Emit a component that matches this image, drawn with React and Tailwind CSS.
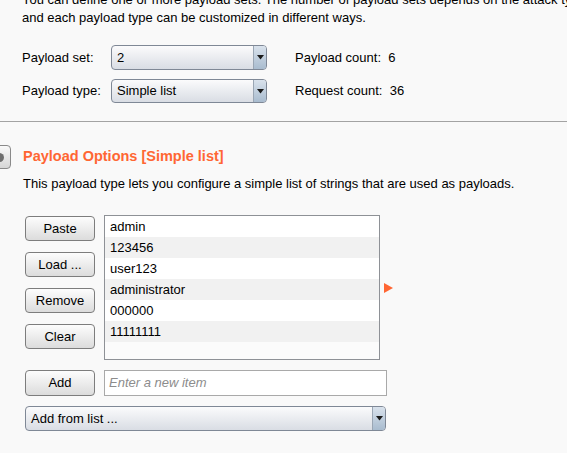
import React from "react";

function Arrow() {
  return (
    <div className="w-[13px] self-stretch flex items-center justify-center border-l border-[#9aa6b4] bg-gradient-to-b from-[#d9e2ec] to-[#a9bccf] rounded-r-[3px]">
      <svg width="7" height="5" viewBox="0 0 7 5"><path d="M0 0H7L3.5 4.5Z" fill="#1a1a1a" /></svg>
    </div>
  );
}

function Select({ value, className }) {
  return (
    <div className={"flex items-stretch border border-[#7f8896] rounded-[4px] bg-gradient-to-b from-[#fbfbfc] to-[#d9dde4] " + className}>
      <div className="flex-1 flex items-center pl-[5px] text-black">{value}</div>
      <Arrow />
    </div>
  );
}

function Btn({ children }) {
  return (
    <div className="w-[70px] h-[25px] flex items-center justify-center border border-[#7d7d7d] rounded-[4px] bg-gradient-to-b from-[#fdfdfd] to-[#dcdcdc] text-black">
      {children}
    </div>
  );
}

export default function App() {
  const items = ["admin", "123456", "user123", "administrator", "000000", "11111111"];
  return (
    <div className="w-[567px] h-[453px] overflow-hidden bg-[#f9f9f9] text-[13px] text-black font-['Liberation_Sans',Arial,sans-serif]">
      <div className="pl-[22px] -mt-[9px] leading-[18px] whitespace-nowrap">
        <div>You can define one or more payload sets. The number of payload sets depends on the attack type defined in the Positions tab.</div>
        <div>and each payload type can be customized in different ways.</div>
      </div>

      <div className="mt-[18px] pl-[22px] flex items-center h-[25px]">
        <div className="w-[89px]">Payload set:</div>
        <Select value="2" className="w-[156px] h-[25px]" />
        <div className="ml-[28px]">Payload count:&nbsp; 6</div>
      </div>
      <div className="mt-[9px] pl-[22px] flex items-center h-[24px]">
        <div className="w-[89px]">Payload type:</div>
        <Select value="Simple list" className="w-[156px] h-[24px]" />
        <div className="ml-[28px]">Request count:&nbsp; 36</div>
      </div>

      <div className="mt-[18px] h-px bg-[#a3a3a3]" />

      <div className="mt-[23px] flex items-center h-[24px]">
        <div className="w-[24px] h-[24px] -ml-[13px] border border-[#8a8a8a] rounded-[4px] bg-gradient-to-b from-[#fafafa] to-[#d6d6d6] flex items-center justify-center">
          <div className="w-[9px] h-[9px] rounded-full bg-[#6e6e6e]" />
        </div>
        <div className="ml-[12px] text-[14.5px] font-bold text-[#ff6633]">Payload Options [Simple list]</div>
      </div>
      <div className="mt-[6px] pl-[23px] h-[18px] leading-[18px]">
        This payload type lets you configure a simple list of strings that are used as payloads.
      </div>

      <div className="mt-[23px] pl-[25px] flex items-start">
        <div className="flex flex-col gap-[11px]">
          <Btn>Paste</Btn>
          <Btn>Load ...</Btn>
          <Btn>Remove</Btn>
          <Btn>Clear</Btn>
        </div>
        <div className="ml-[9px] -mt-px w-[276px] h-[145px] border border-[#8e9196] bg-[#fbfbfb] flex flex-col">
          {items.map((it, i) => (
            <div key={it} className={"h-[21px] flex items-center pl-[5px] " + (i % 2 === 0 ? "bg-white" : "bg-[#f1f1f1]")}>
              {it}
            </div>
          ))}
        </div>
        <div className="ml-[4px] mt-[67px]">
          <svg width="9" height="10" viewBox="0 0 9 10"><path d="M0 0L9 5L0 10Z" fill="#ff6633" /></svg>
        </div>
      </div>

      <div className="mt-[10px] pl-[25px] flex items-center">
        <div className="w-[70px] h-[26px] flex items-center justify-center border border-[#7d7d7d] rounded-[4px] bg-gradient-to-b from-[#fdfdfd] to-[#dcdcdc]">Add</div>
        <div className="ml-[9px] w-[283px] h-[26px] border border-[#a9a9a9] bg-white flex items-center pl-[4px] italic text-[#8c8c8c]">
          Enter a new item
        </div>
      </div>

      <div className="mt-[10px] pl-[25px]">
        <Select value="Add from list ..." className="w-[361px] h-[25px]" />
      </div>
    </div>
  );
}
